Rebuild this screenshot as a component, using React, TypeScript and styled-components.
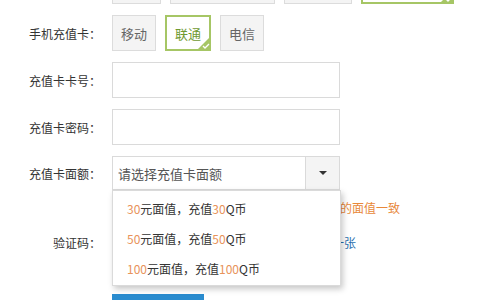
import React from "react"
import styled, { createGlobalStyle } from "styled-components"

const GlobalStyle = createGlobalStyle`
	html, body {
		margin: 0;
		padding: 0;
		background: #fff;
		overflow: hidden;
	}
	body {
		font-family: "Noto Sans CJK SC", "Liberation Sans", sans-serif;
		font-size: 13px;
		color: #333;
	}
`

const Check = () => (
	<Corner>
		<svg width="8" height="6" viewBox="0 0 8 6">
			<path d="M1 3 L3 5 L7 1" stroke="#fff" strokeWidth="1.3" fill="none" />
		</svg>
	</Corner>
)

const options = [
	{ face: "30", coin: "30" },
	{ face: "50", coin: "50" },
	{ face: "100", coin: "100" },
]

const App = () => {
	return (
		<>
			<GlobalStyle />
			<Form>
				<Row>
					<Label />
					<Choices>
						<Choice $w={49} />
						<Choice $w={105} />
						<Choice $w={68} />
						<Choice $w={93} $active>
							<Check />
						</Choice>
					</Choices>
				</Row>
				<Row>
					<Label>手机充值卡：</Label>
					<Choices>
						<Choice>移动</Choice>
						<Choice $active>
							联通
							<Check />
						</Choice>
						<Choice>电信</Choice>
					</Choices>
				</Row>
				<Row>
					<Label>充值卡卡号：</Label>
					<Input />
				</Row>
				<Row>
					<Label>充值卡密码：</Label>
					<Input />
				</Row>
				<Row $tight>
					<Label>充值卡面额：</Label>
					<Select>
						<Placeholder>请选择充值卡面额</Placeholder>
						<Arrow>
							<svg width="8" height="4" viewBox="0 0 8 4">
								<path d="M0 0 L8 0 L4 4 Z" fill="#333" />
							</svg>
						</Arrow>
						<Menu>
							{options.map((o) => (
								<Option key={o.face}>
									<Num>{o.face}</Num>元面值，充值<Num>{o.coin}</Num>Q币
								</Option>
							))}
						</Menu>
					</Select>
				</Row>
				<Hint>温馨提示：请务必确保充值卡面额与您所选的面值一致</Hint>
				<Row>
					<Label>验证码：</Label>
					<Captcha>
						<SmallInput />
						<CodeImage />
						<Refresh>换一张</Refresh>
					</Captcha>
				</Row>
				<Submit>确认充值</Submit>
			</Form>
		</>
	)
}

const Form = styled.div`
	margin-top: -32px;
	display: flex;
	flex-direction: column;
`

const Row = styled.div<{ $tight?: boolean }>`
	display: flex;
	align-items: center;
	height: ${(p) => (p.$tight ? "34px" : "36px")};
	margin-bottom: 11px;
`

const Label = styled.div`
	width: 101px;
	flex-shrink: 0;
	text-align: right;
	padding-right: 11px;
	font-size: 12px;
	color: #333;
`

const Choices = styled.div`
	display: flex;
	gap: 9px;
	height: 100%;
`

const Choice = styled.div<{ $active?: boolean; $w?: number }>`
	position: relative;
	box-sizing: border-box;
	height: 36px;
	${(p) => (p.$w ? `width: ${p.$w}px;` : "padding: 0 8px;")}
	display: flex;
	align-items: center;
	justify-content: center;
	font-size: 13px;
	background: ${(p) => (p.$active ? "#fff" : "#f4f4f4")};
	border: ${(p) => (p.$active ? "2px solid #a6c665" : "1px solid #dcdcdc")};
	color: ${(p) => (p.$active ? "#6f9a33" : "#666")};
`

const Corner = styled.span`
	position: absolute;
	right: -1px;
	bottom: -1px;
	width: 0;
	height: 0;
	border-style: solid;
	border-width: 0 0 13px 13px;
	border-color: transparent transparent #a6c665 transparent;

	svg {
		position: absolute;
		left: -8px;
		top: 6px;
	}
`

const Input = styled.div`
	box-sizing: border-box;
	width: 228px;
	height: 36px;
	border: 1px solid #dadada;
	background: #fff;
`

const Select = styled.div`
	position: relative;
	box-sizing: border-box;
	width: 228px;
	height: 34px;
	border: 1px solid #dadada;
	display: flex;
	align-items: stretch;
`

const Placeholder = styled.div`
	flex: 1;
	display: flex;
	align-items: center;
	padding-left: 5px;
	font-size: 13px;
	color: #555;
`

const Arrow = styled.div`
	width: 33px;
	border-left: 1px solid #dadada;
	background: #f4f4f4;
	display: flex;
	align-items: center;
	justify-content: center;
`

const Menu = styled.div`
	position: absolute;
	top: 33px;
	left: -1px;
	z-index: 2;
	box-sizing: border-box;
	width: 229px;
	height: 96px;
	padding-top: 3px;
	background: #fff;
	border: 1px solid #dadada;
	box-shadow: 2px 3px 6px rgba(0, 0, 0, 0.22);
`

const Option = styled.div`
	height: 30px;
	line-height: 30px;
	padding-left: 14px;
	font-size: 12px;
	color: #333;
`

const Num = styled.span`
	color: #e8935a;
`

const Hint = styled.div`
	margin: -2px 0 0 112px;
	height: 18px;
	line-height: 18px;
	font-size: 12px;
	color: #e8883a;
	margin-bottom: 7px;
`

const Captcha = styled.div`
	display: flex;
	align-items: center;
	gap: 8px;
	height: 100%;
`

const SmallInput = styled.div`
	box-sizing: border-box;
	width: 120px;
	height: 36px;
	border: 1px solid #dadada;
`

const CodeImage = styled.div`
	width: 72px;
	height: 34px;
	background: #eef3f7;
`

const Refresh = styled.span`
	font-size: 12px;
	color: #2a6fae;
`

const Submit = styled.div`
	margin: 23px 0 0 112px;
	width: 92px;
	height: 36px;
	background: #2a8ccf;
	color: #fff;
	font-size: 14px;
	display: flex;
	align-items: center;
	justify-content: center;
`

export default App
